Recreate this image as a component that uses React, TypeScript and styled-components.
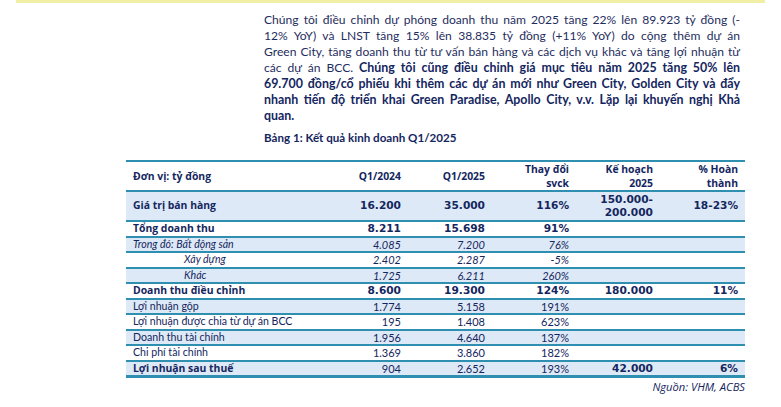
import React from "react";
import styled, { createGlobalStyle } from "styled-components";

const Navy = "#142660";
const Teal = "#2f8fb0";
const Shade = "#dde9f6";

type Kind = "bold" | "italic" | "plain";

type Row = {
  label: string;
  values: string[];
  kind: Kind;
  boldLabel?: boolean;
  indent?: boolean;
  shaded?: boolean;
  tall?: boolean;
};

const rows: Row[] = [
  { label: "Giá trị bán hàng", values: ["16.200", "35.000", "116%", "150.000-\n200.000", "18-23%"], kind: "bold", shaded: true, tall: true },
  { label: "Tổng doanh thu", values: ["8.211", "15.698", "91%", "", ""], kind: "bold" },
  { label: "Trong đó: Bất động sản", values: ["4.085", "7.200", "76%", "", ""], kind: "italic", shaded: true },
  { label: "Xây dựng", values: ["2.402", "2.287", "-5%", "", ""], kind: "italic", indent: true },
  { label: "Khác", values: ["1.725", "6.211", "260%", "", ""], kind: "italic", indent: true, shaded: true },
  { label: "Doanh thu điều chỉnh", values: ["8.600", "19.300", "124%", "180.000", "11%"], kind: "bold" },
  { label: "Lợi nhuận gộp", values: ["1.774", "5.158", "191%", "", ""], kind: "plain", shaded: true },
  { label: "Lợi nhuận được chia từ dự án BCC", values: ["195", "1.408", "623%", "", ""], kind: "plain" },
  { label: "Doanh thu tài chính", values: ["1.956", "4.640", "137%", "", ""], kind: "plain", shaded: true },
  { label: "Chi phí tài chính", values: ["1.369", "3.860", "182%", "", ""], kind: "plain" },
  { label: "Lợi nhuận sau thuế", values: ["904", "2.652", "193%", "42.000", "6%"], kind: "plain", boldLabel: true, shaded: true },
];

export default function App() {
  return (
    <>
      <GlobalStyle />
      <Page>
        <TopStrip />
        <Content>
          <Para>
            <Line>Chúng tôi điều chỉnh dự phóng doanh thu năm 2025 tăng 22% lên 89.923 tỷ đồng (-</Line>
            <Line>12% YoY) và LNST tăng 15% lên 38.835 tỷ đồng (+11% YoY) do cộng thêm dự án</Line>
            <Line>Green City, tăng doanh thu từ tư vấn bán hàng và các dịch vụ khác và tăng lợi nhuận từ</Line>
            <Line>
              các dự án BCC. <b>Chúng tôi cũng điều chỉnh giá mục tiêu năm 2025 tăng 50% lên</b>
            </Line>
            <Line>
              <b>69.700 đồng/cổ phiếu khi thêm các dự án mới như Green City, Golden City và đẩy</b>
            </Line>
            <Line>
              <b>nhanh tiến độ triển khai Green Paradise, Apollo City, v.v. Lặp lại khuyến nghị Khả</b>
            </Line>
            <Line $last>
              <b>quan.</b>
            </Line>
          </Para>
          <Caption>Bảng 1: Kết quả kinh doanh Q1/2025</Caption>
        </Content>
        <TableWrap>
          <Table>
            <colgroup>
              <col style={{ width: 198 }} />
              <col style={{ width: 84 }} />
              <col style={{ width: 84 }} />
              <col style={{ width: 84 }} />
              <col style={{ width: 84 }} />
              <col style={{ width: 85 }} />
            </colgroup>
            <thead>
              <HeadRow>
                <HeadCell $left>Đơn vị: tỷ đồng</HeadCell>
                <HeadCell>Q1/2024</HeadCell>
                <HeadCell>Q1/2025</HeadCell>
                <HeadCell>
                  Thay đổi
                  <br />
                  svck
                </HeadCell>
                <HeadCell>
                  Kế hoạch
                  <br />
                  2025
                </HeadCell>
                <HeadCell>
                  % Hoàn
                  <br />
                  thành
                </HeadCell>
              </HeadRow>
            </thead>
            <tbody>
              {rows.map((r, i) => (
                <BodyRow key={i} $shaded={!!r.shaded} $tall={!!r.tall} $last={i === rows.length - 1}>
                  <LabelCell $bold={r.kind === "bold" || !!r.boldLabel} $italic={r.kind === "italic"} $indent={!!r.indent}>
                    {r.label}
                  </LabelCell>
                  {r.values.map((v, j) => (
                    <NumCell key={j} $kind={j >= 3 && v ? "bold" : r.kind}>
                      {v.split("\n").map((part, k) => (
                        <React.Fragment key={k}>
                          {k > 0 && <br />}
                          {part}
                        </React.Fragment>
                      ))}
                    </NumCell>
                  ))}
                </BodyRow>
              ))}
            </tbody>
          </Table>
          <Source>Nguồn: VHM, ACBS</Source>
        </TableWrap>
      </Page>
    </>
  );
}

const GlobalStyle = createGlobalStyle`
  body {
    margin: 0;
    background: #ffffff;
    font-family: Lato, "Noto Sans", sans-serif;
    color: ${Navy};
  }
`;

const Page = styled.div`
  width: 781px;
  height: 407px;
  overflow: hidden;
  background: #fff;
`;

const TopStrip = styled.div`
  margin: 0 16px;
  height: 3px;
  background: #f1efa6;
`;

const Content = styled.div`
  padding: 9px 0 0 264px;
  width: 476px;
`;

const Para = styled.div`
  font-size: 12.1px;
  line-height: 16px;
  color: #1f2d5e;

  b {
    font-size: 12.4px;
    font-weight: 700;
    color: ${Navy};
  }
`;

const Line = styled.div<{ $last?: boolean }>`
  white-space: nowrap;
  text-align: justify;
  text-align-last: ${(p) => (p.$last ? "left" : "justify")};
`;

const Caption = styled.div`
  margin-top: 6px;
  font-size: 11.6px;
  line-height: 16px;
  font-weight: 700;
  color: ${Navy};
`;

const TableWrap = styled.div`
  margin: 14px 0 0 126px;
  width: 619px;
`;

const Table = styled.table`
  width: 619px;
  border-collapse: collapse;
  table-layout: fixed;
  border-top: 2px solid ${Teal};
`;

const HeadRow = styled.tr`
  height: 30px;
  border-bottom: 2px solid ${Teal};
`;

const HeadCell = styled.th<{ $left?: boolean }>`
  padding: 0 7px;
  font-family: "Open Sans", sans-serif;
  font-size: 10.4px;
  line-height: 14px;
  font-weight: 700;
  text-align: ${(p) => (p.$left ? "left" : "right")};
  vertical-align: middle;
`;

const BodyRow = styled.tr<{ $shaded: boolean; $tall: boolean; $last: boolean }>`
  height: ${(p) => (p.$tall ? 30 : 13.5)}px;
  background: ${(p) => (p.$shaded ? Shade : "#fff")};
  border-bottom: ${(p) => (p.$last ? 3 : 2)}px solid ${Teal};
`;

const LabelCell = styled.td<{ $bold: boolean; $italic: boolean; $indent: boolean }>`
  padding: 0 0 0 ${(p) => (p.$indent ? 58 : 7)}px;
  font-family: ${(p) => (p.$bold ? '"Open Sans", sans-serif' : "Lato, sans-serif")};
  font-size: ${(p) => (p.$bold ? 10.4 : 10.6)}px;
  line-height: 13.5px;
  font-weight: ${(p) => (p.$bold ? 700 : 400)};
  font-style: ${(p) => (p.$italic ? "italic" : "normal")};
  white-space: nowrap;
`;

const NumCell = styled.td<{ $kind: Kind }>`
  padding: 0 7px 0 0;
  font-family: ${(p) => (p.$kind === "bold" ? '"DejaVu Sans", Verdana, sans-serif' : "Lato, sans-serif")};
  font-size: ${(p) => (p.$kind === "bold" ? 10.6 : 11)}px;
  line-height: 13.5px;
  text-align: right;
  font-weight: ${(p) => (p.$kind === "bold" ? 700 : 400)};
  font-style: ${(p) => (p.$kind === "italic" ? "italic" : "normal")};
  white-space: nowrap;
`;

const Source = styled.div`
  margin-top: 1px;
  text-align: right;
  font-family: "Open Sans", sans-serif;
  font-size: 11.2px;
  line-height: 16px;
  font-style: italic;
  color: ${Navy};
`;
